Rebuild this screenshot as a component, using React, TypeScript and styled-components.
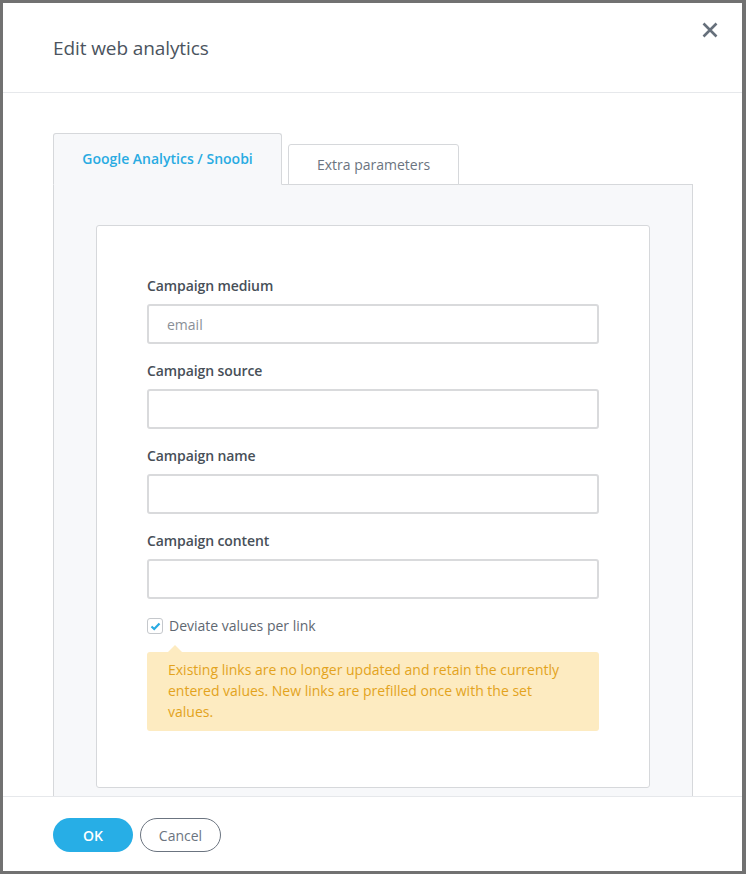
import React from "react";
import styled, { createGlobalStyle } from "styled-components";

const Global = createGlobalStyle`
  html, body { margin: 0; padding: 0; }
  body {
    background: #717171;
    font-family: "Open Sans", "Liberation Sans", sans-serif;
    -webkit-font-smoothing: antialiased;
  }
  * { box-sizing: border-box; }
`;

const Backdrop = styled.div`
  width: 746px;
  height: 874px;
  padding: 3px 4px 3px 3px;
  background: #717171;
`;

const Modal = styled.div`
  width: 739px;
  height: 868px;
  background: #fff;
  display: flex;
  flex-direction: column;
  position: relative;
`;

const Header = styled.div`
  height: 90px;
  flex: none;
  border-bottom: 1px solid #e6e8eb;
  display: flex;
  align-items: center;
  padding: 0 50px;
`;

const Title = styled.h2`
  margin: 0;
  font-size: 19px;
  font-weight: 400;
  color: #4b545e;
  letter-spacing: -0.1px;
`;

const Close = styled.button`
  position: absolute;
  top: 16px;
  right: 21px;
  width: 22px;
  height: 22px;
  border: 0;
  padding: 0;
  background: none;
  display: flex;
  align-items: center;
  justify-content: center;
`;

const Body = styled.div`
  flex: 1;
  overflow: hidden;
  padding: 40px 49px 0 50px;
`;

const Tabs = styled.div`
  display: flex;
  align-items: flex-end;
  gap: 6px;
  position: relative;
  z-index: 1;
  margin-bottom: -1px;
`;

const Tab = styled.div<{ $active?: boolean }>`
  height: ${(p) => (p.$active ? 52 : 41)}px;
  width: ${(p) => (p.$active ? 229 : 171)}px;
  border: 1px solid #d6d8db;
  border-bottom: ${(p) => (p.$active ? "1px solid #f7f8fa" : "1px solid #d6d8db")};
  border-radius: 3px 3px 0 0;
  background: ${(p) => (p.$active ? "#f7f8fa" : "#fff")};
  color: ${(p) => (p.$active ? "#29abe2" : "#6b7480")};
  font-size: 14px;
  font-weight: ${(p) => (p.$active ? 600 : 400)};
  display: flex;
  align-items: center;
  justify-content: center;
  padding-bottom: ${(p) => (p.$active ? 1 : 0)}px;
`;

const Panel = styled.div`
  width: 640px;
  background: #f7f8fa;
  border: 1px solid #d6d8db;
  padding: 40px 42px 40px 42px;
`;

const Card = styled.div`
  background: #fff;
  border: 1px solid #d6d8db;
  border-radius: 3px;
  padding: 50px 50px 56px 50px;
`;

const Field = styled.div`
  display: flex;
  flex-direction: column;
  margin-bottom: 17px;
`;

const Label = styled.label`
  font-size: 14px;
  font-weight: 600;
  color: #474f58;
  line-height: 20px;
  margin-bottom: 8px;
  letter-spacing: -0.1px;
`;

const Input = styled.input`
  height: 40px;
  width: 452px;
  border: 2px solid #d9dadc;
  border-radius: 3px;
  padding: 0 18px;
  font-family: inherit;
  font-size: 14px;
  color: #444;
  outline: none;
  &::placeholder { color: #8a9097; }
`;

const CheckRow = styled.label`
  display: flex;
  align-items: center;
  gap: 6px;
  margin-top: 0;
  font-size: 14px;
  color: #5f6872;
  line-height: 20px;
`;

const Box = styled.span`
  width: 16px;
  height: 16px;
  border: 1px solid #c5c8cc;
  border-radius: 3px;
  background: #fff;
  display: flex;
  align-items: center;
  justify-content: center;
`;

const Warning = styled.div`
  position: relative;
  margin-top: 16px;
  width: 452px;
  background: #fdebc1;
  border-radius: 3px;
  padding: 7px 20px 9px 21px;
  font-size: 14px;
  line-height: 21px;
  color: #e3a31d;
  &::before {
    content: "";
    position: absolute;
    top: -7px;
    left: 21px;
    border-left: 7px solid transparent;
    border-right: 7px solid transparent;
    border-bottom: 7px solid #fdebc1;
  }
`;

const Footer = styled.div`
  height: 75px;
  flex: none;
  border-top: 1px solid #e6e8eb;
  display: flex;
  align-items: center;
  gap: 7px;
  padding: 2px 50px 0;
`;

const Button = styled.button<{ $primary?: boolean }>`
  height: 34px;
  border-radius: 17px;
  font-family: inherit;
  font-size: 14px;
  padding: 0;
  width: ${(p) => (p.$primary ? 80 : 81)}px;
  background: ${(p) => (p.$primary ? "#27aee6" : "#fff")};
  color: ${(p) => (p.$primary ? "#fff" : "#6b7480")};
  border: ${(p) => (p.$primary ? "0" : "1px solid #6b7480")};
  font-weight: ${(p) => (p.$primary ? 600 : 400)};
`;

const fields = [
  { label: "Campaign medium", placeholder: "email" },
  { label: "Campaign source", placeholder: "" },
  { label: "Campaign name", placeholder: "" },
  { label: "Campaign content", placeholder: "" },
];

export default function App() {
  return (
    <>
      <Global />
      <Backdrop>
        <Modal>
          <Header>
            <Title>Edit web analytics</Title>
          </Header>
          <Close aria-label="Close">
            <svg width="16" height="16" viewBox="0 0 16 16">
              <path d="M1.5 1.5 L14.5 14.5 M14.5 1.5 L1.5 14.5" stroke="#66707b" strokeWidth="2.6" strokeLinecap="butt" />
            </svg>
          </Close>
          <Body>
            <Tabs>
              <Tab $active>Google Analytics / Snoobi</Tab>
              <Tab>Extra parameters</Tab>
            </Tabs>
            <Panel>
              <Card>
                {fields.map((f) => (
                  <Field key={f.label}>
                    <Label>{f.label}</Label>
                    <Input placeholder={f.placeholder} />
                  </Field>
                ))}
                <CheckRow>
                  <Box>
                    <svg width="11" height="9" viewBox="0 0 11 9">
                      <path d="M1.5 4.5 L4.2 7 L9.5 1.5" stroke="#29abe2" strokeWidth="2.2" fill="none" />
                    </svg>
                  </Box>
                  Deviate values per link
                </CheckRow>
                <Warning>
                  Existing links are no longer updated and retain the currently entered values. New links are prefilled once with the set values.
                </Warning>
              </Card>
            </Panel>
          </Body>
          <Footer>
            <Button $primary>OK</Button>
            <Button>Cancel</Button>
          </Footer>
        </Modal>
      </Backdrop>
    </>
  );
}
